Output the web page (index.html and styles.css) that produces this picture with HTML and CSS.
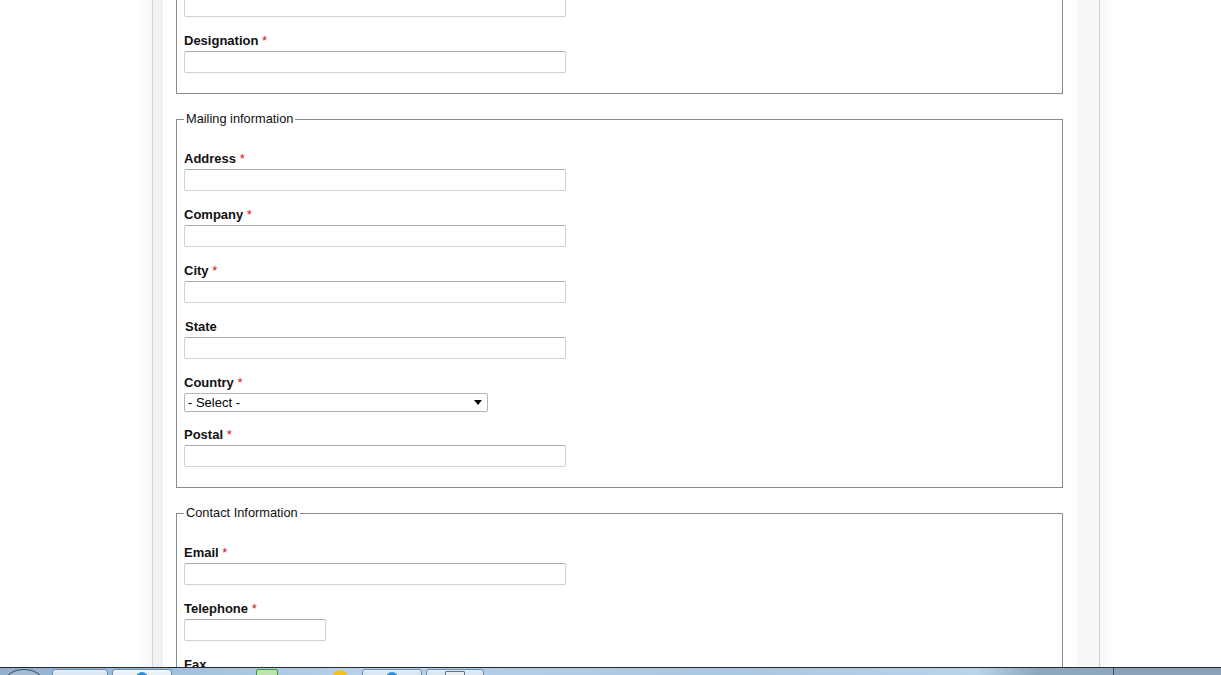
FILE: index.html
```html
<!DOCTYPE html>
<html>
<head>
	<title>Registration Form</title>
	<link rel="stylesheet" href="styles.css">
</head>
<body>
	<div class="screen">
		<div class="viewport">
			<div class="page">
				<div class="content">
					<form class="form">
						<fieldset class="first">
							<div class="field">
								<input type="text" class="text" aria-label="Name">
							</div>
							<div class="field">
								<label>Designation <span class="req">*</span></label>
								<input type="text" class="text">
							</div>
						</fieldset>

						<fieldset>
							<legend>Mailing information</legend>
							<div class="field">
								<label>Address <span class="req">*</span></label>
								<input type="text" class="text">
							</div>
							<div class="field">
								<label>Company <span class="req">*</span></label>
								<input type="text" class="text">
							</div>
							<div class="field">
								<label>City <span class="req">*</span></label>
								<input type="text" class="text">
							</div>
							<div class="field">
								<label class="indent">State</label>
								<input type="text" class="text">
							</div>
							<div class="field field-select">
								<label>Country <span class="req">*</span></label>
								<div class="select">
									<span>- Select -</span>
									<span class="arrow"></span>
								</div>
							</div>
							<div class="field">
								<label>Postal <span class="req">*</span></label>
								<input type="text" class="text">
							</div>
						</fieldset>

						<fieldset>
							<legend>Contact Information</legend>
							<div class="field">
								<label>Email <span class="req">*</span></label>
								<input type="text" class="text">
							</div>
							<div class="field">
								<label>Telephone <span class="req">*</span></label>
								<input type="text" class="text short">
							</div>
							<div class="field">
								<label>Fax</label>
								<input type="text" class="text short">
							</div>
						</fieldset>
					</form>
				</div>
			</div>
		</div>

		<!-- windows taskbar peeking in at the bottom -->
		<div class="taskbar">
			<div class="orb"></div>
			<div class="task w54"></div>
			<div class="task active w60"><span class="ico blue"></span></div>
			<div class="tray-icons">
				<span class="ico green"></span>
				<span class="ico yellow"></span>
			</div>
			<div class="task w60"><span class="ico blue"></span></div>
			<div class="task w58"><span class="ico doc"></span></div>
			<div class="spacer"></div>
			<div class="notify"></div>
		</div>
	</div>
</body>
</html>
```

FILE: styles.css
```css
html, body {
	margin: 0;
	padding: 0;
	background: #fff;
	font-family: "Liberation Sans", Arial, sans-serif;
}

.screen {
	height: 100vh;
	display: flex;
	flex-direction: column;
	overflow: hidden;
}

.viewport {
	flex: 1;
	overflow: hidden;
}

.page {
	box-sizing: border-box;
	width: 948px;
	margin-left: 152px;
	border-left: 1px solid #d6d6d6;
	border-right: 1px solid #cfcfcf;
	background: linear-gradient(to right, #f2f2f2, #f7f7f7);
	padding: 0 22px 0 10px;
	box-shadow: 0 0 18px rgba(0, 0, 0, 0.07);
	min-height: 800px;
}

.content {
	background: #fff;
	padding: 0 14px 0 13px;
	min-height: 800px;
}

/* page is scrolled down a bit */
.form {
	margin-top: -28px;
}

fieldset {
	margin: 0 0 17px 0;
	padding: 22px 7px 6px 7px;
	border: 1px solid #8a8a8a;
}

legend {
	font-size: 12.8px;
	line-height: 16px;
	color: #111;
	padding: 0 2px;
}

.field {
	margin-bottom: 14px;
}

.field-select {
	margin-bottom: 13px;
}

.field label {
	display: block;
	font-size: 13px;
	font-weight: bold;
	line-height: 20px;
	color: #111;
}

.field label.indent {
	padding-left: 1px;
}

.req {
	color: #d01515;
	font-weight: normal;
}

.text {
	display: block;
	box-sizing: border-box;
	width: 382px;
	height: 22px;
	margin: 0;
	border: 1px solid #d2d2d2;
	border-top-color: #ababab;
	border-radius: 2px;
	background: #fff;
}

.text.short {
	width: 142px;
}

.select {
	box-sizing: border-box;
	width: 304px;
	height: 19px;
	border: 1px solid #b4b4b4;
	border-radius: 2px;
	display: flex;
	align-items: center;
	justify-content: space-between;
	padding: 0 5px 0 3px;
	font-size: 13px;
	color: #000;
}

.arrow {
	width: 0;
	height: 0;
	border-left: 4px solid transparent;
	border-right: 4px solid transparent;
	border-top: 5px solid #000;
}

.taskbar {
	height: 7px;
	flex-shrink: 0;
	border-top: 1px solid #222c36;
	background: linear-gradient(to right, #8fb0cf, #b7d2ea 30%, #a9c6e2 60%, #b9d3ea 80%, #8ca6be 85%);
	display: flex;
	align-items: flex-start;
	overflow: hidden;
}

.orb {
	width: 34px;
	height: 20px;
	margin: 1px 10px 0 6px;
	border: 1px solid #3e5670;
	border-radius: 50%;
	background: #a5bdd4;
}

.task {
	height: 10px;
	margin: 1px 4px 0 0;
	border: 1px solid #6f8aa4;
	border-radius: 3px;
	background: linear-gradient(#e6eef6, #c7d9ea);
	display: flex;
	justify-content: center;
}

.task.active {
	background: linear-gradient(#f4f8fc, #d7e6f3);
}

.w54 { width: 54px; }
.w60 { width: 58px; }
.w58 { width: 56px; }

.tray-icons {
	width: 180px;
	display: flex;
	gap: 55px;
	padding-left: 80px;
	box-sizing: border-box;
	margin-right: 6px;
}

.ico {
	display: block;
	width: 12px;
	height: 12px;
	margin-top: 2px;
	border-radius: 50%;
}

.ico.blue { background: #2f8fd8; }
.ico.green { width: 20px; border-radius: 2px; border: 1px solid #3a9a3a; background: #bfe3b0; margin-top: 1px; }
.ico.yellow { background: #f1c21b; width: 14px; }
.ico.doc { width: 18px; border-radius: 1px; border: 1px solid #5d7388; background: #e9eef3; margin-top: 1px; }

.spacer {
	flex: 1;
}

.notify {
	width: 107px;
	height: 100%;
	border-left: 1px solid #3b4d5e;
	background: #8aa2b9;
}
```
